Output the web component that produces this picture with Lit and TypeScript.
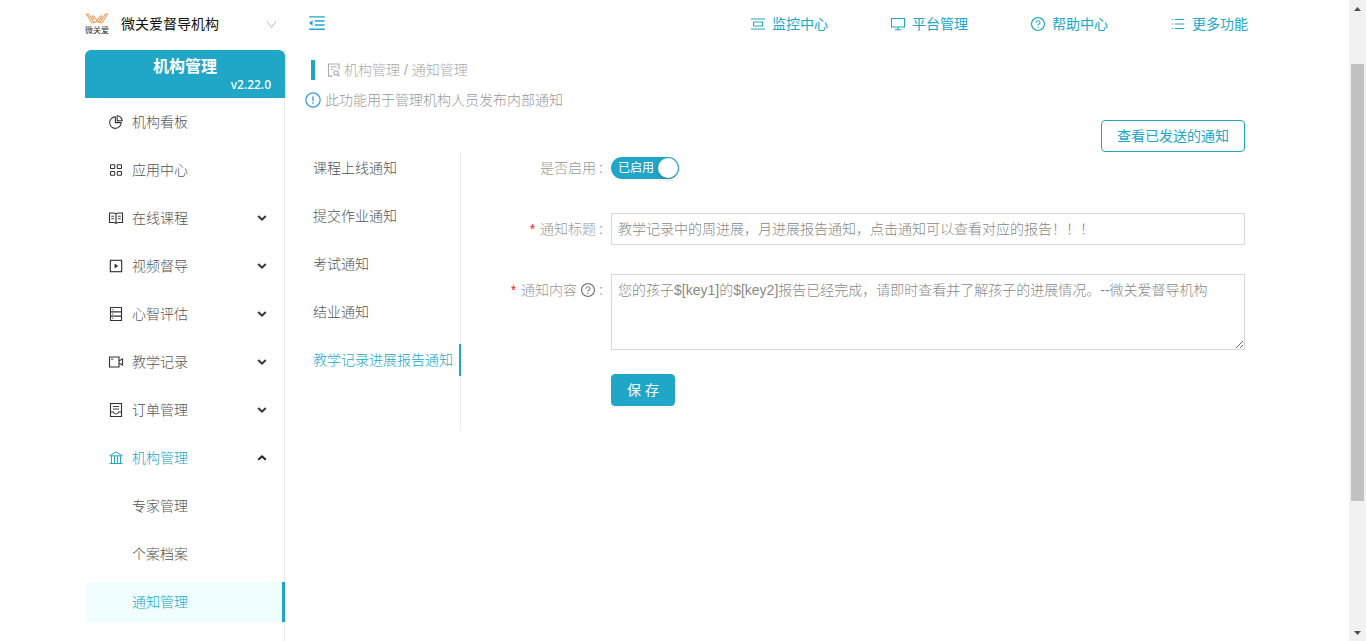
import { LitElement, html, css, svg, nothing } from "lit";
import { customElement, state } from "lit/decorators.js";
import { classMap } from "lit/directives/class-map.js";

const line = (body: unknown, width = 72) =>
  svg`<g fill="none" stroke="currentColor" stroke-width=${width}>${body}</g>`;

const questionMark = svg`<path fill="currentColor" d="M512 64C264.6 64 64 264.6 64 512s200.6 448 448 448 448-200.6 448-448S759.4 64 512 64zm0 820c-205.4 0-372-166.6-372-372s166.6-372 372-372 372 166.6 372 372-166.6 372-372 372z"/><path fill="currentColor" d="M623.6 316.7C593.6 290.4 554 276 512 276s-81.6 14.5-111.6 40.7C369.2 344 352 380.7 352 420v7.6c0 4.4 3.6 8 8 8h48c4.4 0 8-3.6 8-8V420c0-44.1 43.1-80 96-80s96 35.9 96 80c0 31.1-22 59.6-56.1 72.7-21.2 8.1-39.2 22.3-52.1 40.9-13.1 19-19.9 41.8-19.9 64.9V620c0 4.4 3.6 8 8 8h48c4.4 0 8-3.6 8-8v-22.7a48.3 48.3 0 0 1 30.9-44.8c59-22.7 97.1-74.7 97.1-132.5.1-39.3-17.1-76-48.3-103.3zM472 732a40 40 0 1 0 80 0 40 40 0 1 0-80 0z"/>`;

const ICONS: Record<string, unknown> = {
  fold: svg`<path fill="currentColor" d="M408 442h480c4.4 0 8-3.6 8-8v-56c0-4.4-3.6-8-8-8H408c-4.4 0-8 3.6-8 8v56c0 4.4 3.6 8 8 8zm-8 204c0 4.4 3.6 8 8 8h480c4.4 0 8-3.6 8-8v-56c0-4.4-3.6-8-8-8H408c-4.4 0-8 3.6-8 8v56zm504-486H120c-4.4 0-8 3.6-8 8v56c0 4.4 3.6 8 8 8h784c4.4 0 8-3.6 8-8v-56c0-4.4-3.6-8-8-8zm0 632H120c-4.4 0-8 3.6-8 8v56c0 4.4 3.6 8 8 8h784c4.4 0 8-3.6 8-8v-56c0-4.4-3.6-8-8-8zM115.4 518.9L271.7 642c5.8 4.6 14.4.5 14.4-6.9V388.9c0-7.4-8.5-11.5-14.4-6.9L115.4 505.1a8.74 8.74 0 0 0 0 13.8z"/>`,
  pie: svg`<path fill="currentColor" d="M864 518H506V160c0-4.4-3.6-8-8-8h-26a398.46 398.46 0 0 0-282.8 117.1 398.19 398.19 0 0 0-85.7 127.1A397.61 397.61 0 0 0 72 552a398.46 398.46 0 0 0 117.1 282.8c36.7 36.7 79.5 65.6 127.1 85.7A397.61 397.61 0 0 0 472 952a398.46 398.46 0 0 0 282.8-117.1c36.7-36.7 65.6-79.5 85.7-127.1A397.61 397.61 0 0 0 872 552v-26c0-4.4-3.6-8-8-8zM705.7 787.8A331.59 331.59 0 0 1 470.4 884c-88.1-.4-170.9-34.9-233.2-97.2C174.5 724.1 140 640.7 140 552c0-88.7 34.5-172.1 97.2-234.8 54.6-54.6 124.9-87.9 200.8-95.5V586h364.3c-7.7 76.3-41.3 147-96.6 201.8zM952 462.4l-2.6-28.2c-8.5-92.1-49.4-179-115.2-244.6A399.4 399.4 0 0 0 589 74.6L560.7 72c-4.700-.4-8.700 3.200-8.700 7.900V464c0 4.400 3.600 8 8 8l384-1c4.700 0 8.400-4 8-8.600zm-332.200-58.200V147.600a332.240 332.240 0 0 1 166.400 89.800c45.700 45.600 77 103.600 90 166.100l-256.400.7z"/>`,
  apps: line(svg`<path d="M160 176h272v240H160zM592 176h272v240H592zM160 608h272v240H160zM592 608h272v240H592z"/>`, 64),
  read: line(svg`<path d="M96 192h232c76 0 140 20 184 56 44-36 108-56 184-56h232v608H696c-76 0-142 18-184 48-42-30-108-48-184-48H96zM512 248v600"/><path stroke-width="60" d="M210 400h180M210 560h180M634 400h180M634 560h180"/>`),
  play: line(svg`<rect x="148" y="148" width="728" height="728"/><path fill="currentColor" stroke="none" d="M420 350v324l232-162z"/>`),
  server: line(svg`<path d="M160 96h704v832H160zM160 374h704M160 650h704"/><path stroke-width="64" d="M270 238h70M270 512h70M270 788h70"/>`),
  video: line(svg`<path d="M96 192h608v640H96zM704 440l224-120v384L704 584"/><path stroke-width="60" d="M190 330h150"/>`),
  order: line(svg`<path d="M160 96h704v832H160zM160 640h190c20 90 80 130 162 130s142-40 162-130h190"/><path stroke-width="60" d="M310 290h404M310 450h404"/>`),
  bank: line(svg`<path d="M110 374L512 120l402 254zM224 390v440M415 390v440M610 390v440M800 390v440M96 864h832"/>`, 64),
  monitor: svg`<path stroke="currentColor" stroke-width="64" d="M64 192h896M64 832h896"/><rect x="224" y="384" width="576" height="256" fill="none" stroke="currentColor" stroke-width="64"/>`,
  desktop: line(svg`<path d="M96 160h832v544H96zM512 704v160M320 880h384"/>`, 68),
  help: questionMark,
  list: svg`<path stroke="currentColor" stroke-width="70" d="M110 224h80M110 512h80M110 800h80M310 224h600M310 512h600M310 800h600"/>`,
  search: line(svg`<path d="M440 900H160V128h672v360M290 300h400M290 460h180"/><circle cx="640" cy="700" r="140"/><path d="M740 800l130 120"/>`),
  info: svg`<circle cx="512" cy="512" r="456" fill="none" stroke="currentColor" stroke-width="84"/><path stroke="currentColor" stroke-width="90" d="M512 270v310M512 660v90"/>`,
  down: svg`<path fill="none" stroke="currentColor" stroke-width="170" d="M190 350l322 300 322-300"/>`,
  up: svg`<path fill="none" stroke="currentColor" stroke-width="170" d="M190 670l322-300 322 300"/>`,
};

const icon = (name: string, extra = "") =>
  html`<svg class="icon ${extra}" viewBox="0 0 1024 1024" aria-hidden="true">${ICONS[name]}</svg>`;

const MENU = [
  { label: "机构看板", icon: "pie" },
  { label: "应用中心", icon: "apps" },
  { label: "在线课程", icon: "read", group: true },
  { label: "视频督导", icon: "play", group: true },
  { label: "心智评估", icon: "server", group: true },
  { label: "教学记录", icon: "video", group: true },
  { label: "订单管理", icon: "order", group: true },
  { label: "机构管理", icon: "bank", group: true, open: true },
];
const SUBMENU = ["专家管理", "个案档案", "通知管理"];
const LINKS = [
  ["monitor", "监控中心"],
  ["desktop", "平台管理"],
  ["help", "帮助中心"],
  ["list", "更多功能"],
];
const TABS = ["课程上线通知", "提交作业通知", "考试通知", "结业通知", "教学记录进展报告通知"];

@customElement("app-root")
export class AppRoot extends LitElement {
  @state() private tab = 4;
  @state() private page = "通知管理";

  static styles = css`
    :host {
      --brand: #20a7c7;
      display: flex;
      height: 100vh;
      overflow: hidden;
      background: #fff;
      color: #555;
      font: 300 14px/22px "Liberation Sans", "Noto Sans CJK SC", sans-serif;
    }
    * { box-sizing: border-box; }
    a { color: inherit; text-decoration: none; }
    ul { list-style: none; margin: 0; padding: 0; }
    button, input, select, textarea { font: inherit; margin: 0; }
    .icon { width: 16px; height: 16px; flex: none; display: block; }
    .icon.big { width: 20px; height: 20px; }
    .icon.arrow { width: 12px; height: 12px; margin-left: auto; color: #222; }

    .page { flex: 1; min-width: 0; padding: 0 85px; overflow: hidden; }
    .top { display: flex; align-items: center; height: 48px; padding-right: 16px; }
    .org { display: flex; align-items: center; gap: 12px; width: 200px; }
    .logo { width: 24px; height: 24px; flex: none; }
    .logo text { font: 400 8px "Noto Sans CJK SC", sans-serif; fill: #333; }
    .picker { flex: 1; display: flex; align-items: center; padding-right: 8px; }
    .picker select {
      flex: 1; min-width: 0; height: 22px; appearance: none; border: 0; padding: 0 0 2px;
      background: none; color: #111; font-weight: 400; outline: 0;
    }
    .picker .icon { color: #bfbfbf; width: 11px; height: 11px; }
    .fold {
      border: 0; padding: 0 0 2px; background: none; color: var(--brand);
      margin-left: 22px; height: 22px; cursor: pointer;
    }
    .links { display: flex; gap: 62px; margin-left: auto; color: var(--brand); font-weight: 400; }
    .links a { display: flex; align-items: center; gap: 6px; }

    .body { display: flex; padding-top: 2px; min-height: calc(100vh - 48px); }
    .side { width: 200px; flex: none; border-right: 1px solid #ebebeb; }
    .brand {
      height: 48px; margin-right: -1px; padding: 6px 14px 0;
      border-radius: 6px 6px 0 0; background: var(--brand); color: #fff;
    }
    .brand h1 { margin: 0; font-size: 16px; font-weight: 700; line-height: 22px; text-align: center; }
    .brand p {
      margin: 0; text-align: right;
      font: 500 12px/13px "Noto Sans", sans-serif;
    }
    .menu { margin-right: -1px; padding-top: 4px; }
    .menu a {
      display: flex; align-items: center; gap: 8px;
      height: 40px; margin-bottom: 8px; padding: 0 17px 0 23px;
    }
    .menu .icon { color: #333; }
    .menu a.open, .menu a.open .icon { color: var(--brand); }
    .menu a.open .icon.arrow { color: #222; }
    .menu .sub a { padding-left: 47px; }
    .menu .sub a.on {
      background: #f0feff; color: var(--brand);
      border-right: 3px solid var(--brand);
    }

    .main { flex: 1; min-width: 0; padding: 10px 19px 0 20px; color: #999; }
    .crumbs {
      display: flex; align-items: center; gap: 2px; height: 20px; margin-left: 6px;
      padding-left: 11px; border-left: 4px solid var(--brand); color: #aaa;
    }
    .hint { display: flex; align-items: center; gap: 4px; height: 20px; margin: 10px 0; }
    .hint .icon { color: #3d9be9; }
    .actions { display: flex; justify-content: flex-end; }
    .btn {
      min-width: 64px; height: 32px; padding: 0 14px; border: 1px solid var(--brand); border-radius: 4px;
      background: #fff; color: var(--brand); font-weight: 400; cursor: pointer;
    }
    .actions .btn { min-width: 144px; }
    .btn.primary {
      background: var(--brand); color: #fff; box-shadow: 0 2px 0 rgba(0, 0, 0, 0.04);
    }
    .panel { display: flex; }
    .tabs { width: 156px; flex: none; height: 279px; border-right: 1px solid #ebebeb; }
    .tabs button {
      display: block; width: 156px; height: 32px; margin-bottom: 16px; padding: 0 0 0 8px;
      border: 0; background: none; color: #555; text-align: left; white-space: nowrap;
      border-right: 2px solid transparent; cursor: pointer;
    }
    .tabs button.on { color: var(--brand); border-right-color: var(--brand); }

    .form { flex: 1; min-width: 0; }
    .row { display: grid; grid-template-columns: 142px 1fr; column-gap: 8px; margin-bottom: 29px; }
    .row .label {
      display: flex; align-items: center; justify-content: flex-end;
      height: 32px; gap: 3px;
    }
    .label .req { margin-right: 2px; color: #f5222d; font-weight: 400; line-height: 14px; }
    .label .icon { color: #777; }
    .field {
      display: block; width: 100%; height: 32px; padding: 3px 6px 5px;
      border: 1px solid #d9d9d9; border-radius: 0; background: #fff; color: #888; outline: 0;
    }
    textarea.field { height: 76px; padding: 4px 6px; resize: vertical; }
    .switch {
      display: flex; align-items: center; justify-content: space-between; align-self: center;
      width: 68px; height: 22px; padding: 0 1px 0 7px; border-radius: 11px;
      background: var(--brand); color: #fff; font-size: 12px; font-weight: 400; cursor: pointer;
    }
    .switch input {
      appearance: none; order: 1; width: 20px; height: 20px; border-radius: 50%;
      background: #fff; box-shadow: 0 2px 4px rgba(0, 35, 11, 0.2);
    }
    .row.text { margin-bottom: 24px; }
    .row.last { margin: 0; }

    .scroll {
      width: 17px; flex: none; display: flex; flex-direction: column;
      align-items: center; justify-content: space-between; padding: 7px 0 6px; background: #f1f1f1;
    }
    .scroll .track { flex: 1; width: 13px; padding-top: 53px; }
    .scroll .thumb { height: 77%; min-height: 20px; background: #c1c1c1; }
    .scroll svg { width: 7px; height: 4px; fill: #505050; }
  `;

  private label(text: string, forId: string, required = false, help = false) {
    return html`<label class="label" for=${forId}>
      ${required ? html`<span class="req">*</span>` : nothing}<span>${text}</span>${help ? icon("help") : nothing}<span>:</span>
    </label>`;
  }

  render() {
    return html`
      <div class="page">
        <header class="top">
          <div class="org">
            <svg class="logo" viewBox="0 0 24 24" role="img" aria-label="微关爱">
              <g fill="none" stroke="#eba266" stroke-width="1.2" stroke-linecap="round" stroke-linejoin="round">
                <path d="M1.500 2h2l5 7.500c.8 1.200 2 1.200 2.800 0l3.700-5c.8-1.200 2.200-.4 1.500.9l-3 4.100"/>
                <path d="M22.500 2h-2l-5 7.500c-.8 1.200-2 1.200-2.800 0L9 4.500c-.8-1.200-2.200-.4-1.500.9l1.500 2"/>
                <path d="M1.500 2l4.800 8c.8 1.300 2 1.300 2.800.2M22.500 2l-4.800 8c-.8 1.300-2 1.300-2.800.2"/>
              </g>
              <text x="0" y="21">微关爱</text>
            </svg>
            <div class="picker">
              <select aria-label="机构"><option>微关爱督导机构</option></select>
              <svg class="icon" viewBox="0 0 12 12" aria-hidden="true"><path d="M1 2.500l5 6.500 5-6.500" fill="none" stroke="currentColor" stroke-width="1.100"/></svg>
            </div>
          </div>
          <button class="fold" aria-label="收起菜单">${icon("fold", "big")}</button>
          <nav class="links">
            ${LINKS.map(([i, t]) => html`<a href="#">${icon(i)}<span>${t}</span></a>`)}
          </nav>
        </header>
        <div class="body">
          <aside class="side">
            <div class="brand"><h1>机构管理</h1><p>v2.22.0</p></div>
            <ul class="menu">
              ${MENU.map(
                (m) => html`<li>
                  <a href="#" class=${classMap({ open: !!m.open })}>
                    ${icon(m.icon)}<span>${m.label}</span>
                    ${m.group ? icon(m.open ? "up" : "down", "arrow") : nothing}
                  </a>
                  ${m.open
                    ? html`<ul class="sub">
                        ${SUBMENU.map(
                          (s) => html`<li><a href="#" class=${classMap({ on: s === this.page })}
                            @click=${() => (this.page = s)}>${s}</a></li>`
                        )}
                      </ul>`
                    : nothing}
                </li>`
              )}
            </ul>
          </aside>
          <main class="main">
            <div class="crumbs">${icon("search")}<span>机构管理 / 通知管理</span></div>
            <div class="hint">${icon("info")}<span>此功能用于管理机构人员发布内部通知</span></div>
            <div class="actions"><button class="btn">查看已发送的通知</button></div>
            <div class="panel">
              <div class="tabs" role="tablist">
                ${TABS.map(
                  (t, i) => html`<button role="tab" aria-selected=${i === this.tab}
                    class=${classMap({ on: i === this.tab })} @click=${() => (this.tab = i)}>${t}</button>`
                )}
              </div>
              <form class="form" @submit=${(e: Event) => e.preventDefault()}>
                <div class="row">
                  ${this.label("是否启用", "enabled")}
                  <label class="switch"><input id="enabled" type="checkbox" role="switch" checked /><span>已启用</span></label>
                </div>
                <div class="row">
                  ${this.label("通知标题", "title", true)}
                  <input class="field" id="title" type="text" value="教学记录中的周进展，月进展报告通知，点击通知可以查看对应的报告！！！" />
                </div>
                <div class="row text">
                  ${this.label("通知内容", "content", true, true)}
                  <textarea class="field" id="content" .value=${"您的孩子$[key1]的$[key2]报告已经完成，请即时查看并了解孩子的进展情况。--微关爱督导机构"}></textarea>
                </div>
                <div class="row last"><span></span><div><button class="btn primary" type="submit">保 存</button></div></div>
              </form>
            </div>
          </main>
        </div>
      </div>
      <div class="scroll" aria-hidden="true">
        <svg viewBox="0 0 7 4"><path d="M3.500 0L7 4H0z"/></svg>
        <div class="track"><div class="thumb"></div></div>
        <svg viewBox="0 0 7 4"><path d="M0 0h7L3.500 4z"/></svg>
      </div>
    `;
  }
}
